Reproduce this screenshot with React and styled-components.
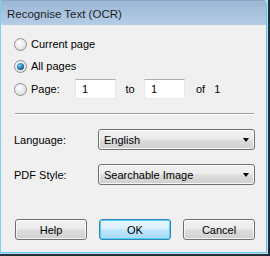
import React from "react";
import styled, { createGlobalStyle } from "styled-components";

const Global = createGlobalStyle`
  html, body { margin: 0; padding: 0; background: #f0f0f0; }
  body { font-family: "Liberation Sans", Arial, sans-serif; font-size: 11px; color: #000; }
  * { box-sizing: border-box; }
`;

const Window = styled.div`
  width: 270px;
  height: 256px;
  border-right: 2px solid #1f2f3c;
  border-bottom: 2px solid #1f2f3c;
  background: #c9d9ea;
  padding: 0 1px 1px 0;
  display: flex;
`;

const Inner = styled.div`
  flex: 1;
  display: flex;
  flex-direction: column;
  border-left: 1px solid #7fd2ee;
  border-right: 1px solid #5cc8ee;
  border-bottom: 1px solid #5cc8ee;
  border-top: 1px solid #8ea6bf;
  border-top-right-radius: 4px;
  overflow: hidden;
  background: #f0f0f0;
`;

const TitleBar = styled.div`
  height: 24px;
  flex: none;
  display: flex;
  align-items: center;
  padding: 1px 0 0 6px;
  font-size: 11.5px;
  color: #1e1e1e;
  background: linear-gradient(#9cb7d5, #b5cde7);
`;

const Body = styled.div`
  flex: 1;
  display: flex;
  flex-direction: column;
  padding: 9px 11px 0 13px;
`;

const Row = styled.div`
  display: flex;
  align-items: center;
  height: ${(p) => p.h || 20}px;
  margin-bottom: ${(p) => p.mb || 0}px;
`;

const RadioCircle = styled.span`
  width: 13px;
  height: 13px;
  border-radius: 50%;
  border: 1px solid #8e8f8f;
  background: radial-gradient(circle at 40% 35%, #ffffff 0%, #e8e8e8 55%, #d0d0d0 100%);
  display: inline-flex;
  align-items: center;
  justify-content: center;
  margin-right: 4px;
  flex: none;
  &::after {
    content: "";
    display: ${(p) => (p.checked ? "block" : "none")};
    width: 7px;
    height: 7px;
    border-radius: 50%;
    background: radial-gradient(circle at 40% 35%, #7fd2f8 0%, #1c6ea8 55%, #0c3f6a 100%);
  }
`;

const Label = styled.span`
  width: ${(p) => (p.w ? p.w + "px" : "auto")};
  text-align: ${(p) => p.align || "left"};
  margin-left: ${(p) => p.ml || 0}px;
  flex: none;
`;

const TextBox = styled.div`
  width: 41px;
  height: 20px;
  background: #fff;
  border: 1px solid #e3e9ef;
  border-top-color: #abadb3;
  display: flex;
  align-items: center;
  padding-left: 6px;
  flex: none;
`;

const Separator = styled.div`
  height: 2px;
  border-top: 1px solid #a0a0a0;
  border-bottom: 1px solid #ffffff;
  margin: 0 1px 14px 1px;
`;

const Select = styled.div`
  width: 157px;
  height: 21px;
  margin-left: auto;
  border: 1px solid #707070;
  border-radius: 3px;
  background: linear-gradient(#f2f2f2 0%, #ebebeb 48%, #dddddd 52%, #cfcfcf 100%);
  box-shadow: inset 0 0 0 1px rgba(255, 255, 255, 0.8);
  display: flex;
  align-items: center;
  padding: 0 5px 0 5px;
`;

const Arrow = styled.span`
  margin-left: auto;
  width: 0;
  height: 0;
  border-left: 3.5px solid transparent;
  border-right: 3.5px solid transparent;
  border-top: 4px solid #000;
`;

const Buttons = styled.div`
  display: flex;
  gap: 12px;
  margin-top: auto;
  margin-bottom: 12px;
  padding-left: 1px;
`;

const Button = styled.div`
  width: 73px;
  height: 21px;
  border: 1px solid ${(p) => (p.primary ? "#3c7fb1" : "#707070")};
  border-radius: 3px;
  display: flex;
  align-items: center;
  justify-content: center;
  background: ${(p) =>
    p.primary
      ? "linear-gradient(#eaf6fd 0%, #d9f0fc 48%, #bee6fd 52%, #a7d9f5 100%)"
      : "linear-gradient(#f2f2f2 0%, #ebebeb 48%, #dddddd 52%, #cfcfcf 100%)"};
  box-shadow: ${(p) =>
    p.primary ? "inset 0 0 0 1px #48d6fb" : "inset 0 0 0 1px rgba(255,255,255,0.75)"};
`;

export default function App() {
  return (
    <>
      <Global />
      <Window>
        <Inner>
          <TitleBar>Recognise Text (OCR)</TitleBar>
          <Body>
            <Row mb={2}>
              <RadioCircle />
              <Label>Current page</Label>
            </Row>
            <Row mb={3}>
              <RadioCircle checked />
              <Label>All pages</Label>
            </Row>
            <Row h={20} mb={14}>
              <RadioCircle />
              <Label w={44}>Page:</Label>
              <TextBox>1</TextBox>
              <Label w={28} align="center">to</Label>
              <TextBox>1</TextBox>
              <Label ml={11}>of</Label>
              <Label ml={9}>1</Label>
            </Row>
            <Separator />
            <Row h={21} mb={14}>
              <Label>Language:</Label>
              <Select>
                English
                <Arrow />
              </Select>
            </Row>
            <Row h={21}>
              <Label>PDF Style:</Label>
              <Select>
                Searchable Image
                <Arrow />
              </Select>
            </Row>
            <Buttons>
              <Button>Help</Button>
              <Button primary>OK</Button>
              <Button>Cancel</Button>
            </Buttons>
          </Body>
        </Inner>
      </Window>
    </>
  );
}
